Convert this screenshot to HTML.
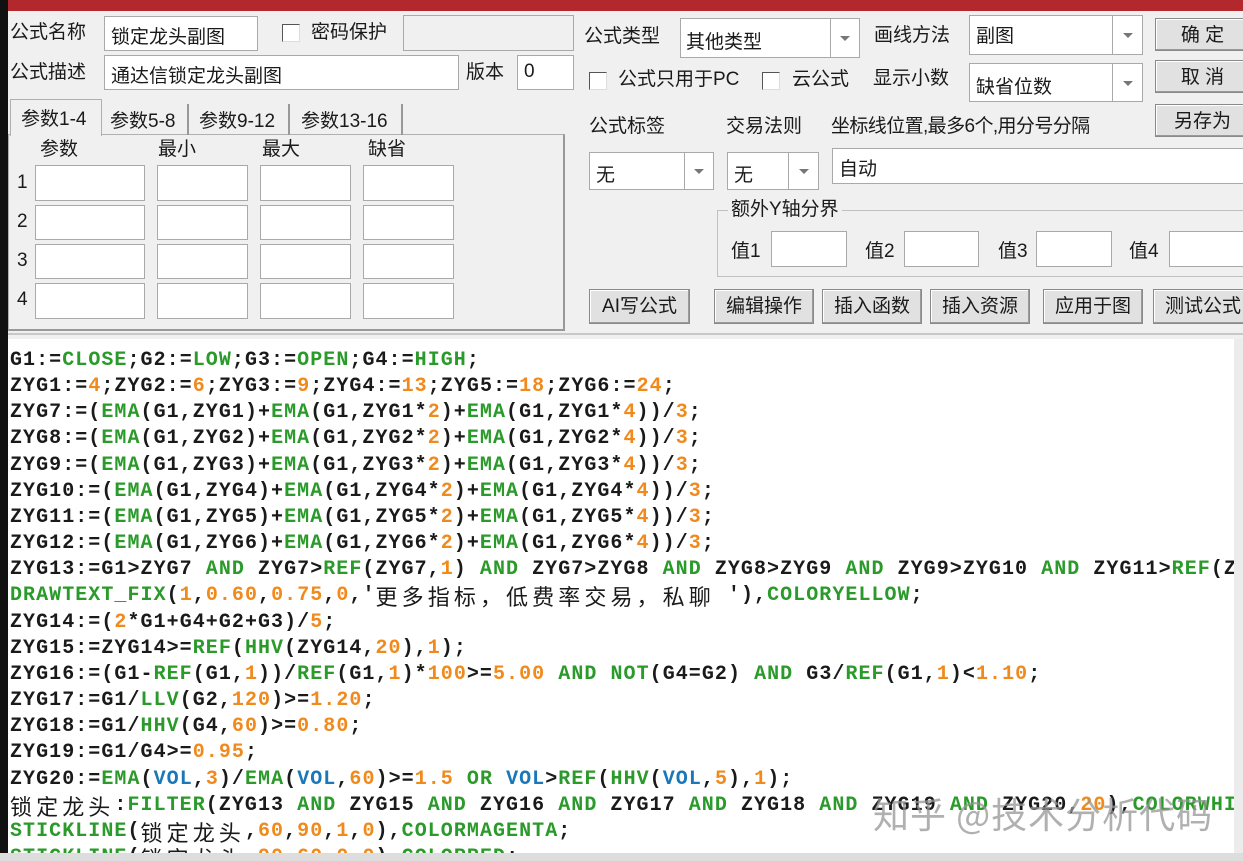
<!DOCTYPE html>
<html><head><meta charset="utf-8"><style>
*{margin:0;padding:0;box-sizing:border-box}
body{width:1243px;height:861px;overflow:hidden;background:#f0f0f0;position:relative;font-family:"Liberation Sans","Noto Sans CJK SC",sans-serif;font-size:19px;color:#1a1a1a}
.a{position:absolute;white-space:nowrap}
.in{position:absolute;background:#fff;border:1px solid #a9a9a9}
.gr{background:#f0f0f0}
.cb{position:absolute;background:#fff;border:1px solid #555;border-right-color:#ddd;border-bottom-color:#ddd;width:18px;height:18px}
.combo{position:absolute;background:#fff;border:1px solid #a9a9a9}
.combo .s{position:absolute;top:0;bottom:0;border-left:1px solid #a9a9a9;right:0}
.combo .s:after{content:"";position:absolute;left:50%;top:50%;margin:-2px 0 0 -5px;border:5px solid transparent;border-top:5px solid #777;border-bottom:0}
.btn{position:absolute;background:#e1e1e1;border:1px solid #8a8a8a;box-shadow:inset -1px -1px 0 #9a9a9a,inset 1px 1px 0 #fff;text-align:center;line-height:33px}
.lb{position:absolute;white-space:nowrap;line-height:22px}
#ed{position:absolute;left:8px;top:339px;width:1226px;height:514px;background:#fff;overflow:hidden}
#code{position:absolute;left:2px;top:9px;font-family:"Liberation Mono","Noto Sans CJK SC",monospace;font-weight:bold;font-size:20px;letter-spacing:1.05px;white-space:pre;color:#1a1a1a}
#code div{height:26.17px;line-height:26.17px;overflow:visible}
.g{color:#2a9a2a}.o{color:#f08a1c}.b{color:#1a78b8}
.c{font-family:"Noto Sans CJK SC",sans-serif;font-weight:normal;font-size:22px;letter-spacing:4.1px;display:inline-block;height:26px;line-height:26px;vertical-align:top}
</style></head><body>
<div class="a" style="left:0;top:0;width:1243px;height:11px;background:#b3282d"></div>
<div class="a" style="left:0;top:0;width:8px;height:861px;background:#111"></div>
<div class="a" style="left:0;top:853px;width:1243px;height:8px;background:#ddd"></div>
<div class="a" style="left:1234px;top:339px;width:9px;height:514px;background:#ececec"></div>

<div class="lb" style="left:10px;top:22px">公式名称</div>
<div class="in" style="left:104px;top:16px;width:154px;height:35px"><span class="a" style="left:6px;top:5px">锁定龙头副图</span></div>
<div class="cb" style="left:282px;top:24px"></div>
<div class="lb" style="left:311px;top:22px">密码保护</div>
<div class="in gr" style="left:403px;top:15px;width:171px;height:36px"></div>
<div class="lb" style="left:10px;top:62px">公式描述</div>
<div class="in" style="left:104px;top:55px;width:355px;height:35px"><span class="a" style="left:6px;top:5px">通达信锁定龙头副图</span></div>
<div class="lb" style="left:466px;top:62px">版本</div>
<div class="in" style="left:517px;top:55px;width:57px;height:35px"><span class="a" style="left:6px;top:5px">0</span></div>

<div class="a" style="left:8px;top:134px;width:557px;height:197px;border:1px solid #b0b0b0;border-right:2px solid #999;border-bottom:2px solid #999"></div>
<div class="a" style="left:10px;top:99px;width:92px;height:37px;border:1px solid #b0b0b0;border-bottom:none;background:#f0f0f0;padding:4px 0 0 10px">参数1-4</div>
<div class="a" style="left:103px;top:104px;width:86px;height:31px;border-right:2px solid #999;padding:2px 0 0 7px">参数5-8</div>
<div class="a" style="left:191px;top:104px;width:99px;height:31px;border-right:2px solid #999;padding:2px 0 0 8px">参数9-12</div>
<div class="a" style="left:292px;top:104px;width:111px;height:31px;border-right:2px solid #999;padding:2px 0 0 9px">参数13-16</div>
<div class="lb" style="left:40px;top:139px">参数</div>
<div class="lb" style="left:158px;top:139px">最小</div>
<div class="lb" style="left:262px;top:139px">最大</div>
<div class="lb" style="left:368px;top:139px">缺省</div>
<div class="lb" style="left:17px;top:172px">1</div><div class="lb" style="left:17px;top:211px">2</div><div class="lb" style="left:17px;top:250px">3</div><div class="lb" style="left:17px;top:289px">4</div>
<div class="in" style="left:35px;top:165px;width:110px;height:36px"></div><div class="in" style="left:157px;top:165px;width:91px;height:36px"></div><div class="in" style="left:260px;top:165px;width:91px;height:36px"></div><div class="in" style="left:363px;top:165px;width:91px;height:36px"></div>
<div class="in" style="left:35px;top:205px;width:110px;height:35px"></div><div class="in" style="left:157px;top:205px;width:91px;height:35px"></div><div class="in" style="left:260px;top:205px;width:91px;height:35px"></div><div class="in" style="left:363px;top:205px;width:91px;height:35px"></div>
<div class="in" style="left:35px;top:244px;width:110px;height:35px"></div><div class="in" style="left:157px;top:244px;width:91px;height:35px"></div><div class="in" style="left:260px;top:244px;width:91px;height:35px"></div><div class="in" style="left:363px;top:244px;width:91px;height:35px"></div>
<div class="in" style="left:35px;top:283px;width:110px;height:36px"></div><div class="in" style="left:157px;top:283px;width:91px;height:36px"></div><div class="in" style="left:260px;top:283px;width:91px;height:36px"></div><div class="in" style="left:363px;top:283px;width:91px;height:36px"></div>

<div class="lb" style="left:584px;top:26px">公式类型</div>
<div class="combo" style="left:680px;top:18px;width:180px;height:40px"><span class="a" style="left:5px;top:8px">其他类型</span><div class="s" style="width:29px"></div></div>
<div class="lb" style="left:874px;top:25px">画线方法</div>
<div class="combo" style="left:969px;top:15px;width:174px;height:40px"><span class="a" style="left:6px;top:5px">副图</span><div class="s" style="width:30px"></div></div>
<div class="btn" style="left:1155px;top:18px;width:95px;height:33px">确 定</div>
<div class="btn" style="left:1155px;top:60px;width:95px;height:33px">取 消</div>
<div class="btn" style="left:1155px;top:104px;width:95px;height:33px">另存为</div>
<div class="cb" style="left:589px;top:72px"></div>
<div class="lb" style="left:618px;top:69px">公式只用于PC</div>
<div class="cb" style="left:762px;top:72px"></div>
<div class="lb" style="left:792px;top:69px">云公式</div>
<div class="lb" style="left:873px;top:68px">显示小数</div>
<div class="combo" style="left:969px;top:63px;width:174px;height:39px"><span class="a" style="left:6px;top:8px">缺省位数</span><div class="s" style="width:30px"></div></div>
<div class="lb" style="left:589px;top:116px">公式标签</div>
<div class="lb" style="left:726px;top:116px">交易法则</div>
<div class="lb" style="left:831px;top:116px;letter-spacing:-0.6px">坐标线位置,最多6个,用分号分隔</div>
<div class="combo" style="left:589px;top:152px;width:125px;height:38px"><span class="a" style="left:6px;top:7px">无</span><div class="s" style="width:29px"></div></div>
<div class="combo" style="left:727px;top:152px;width:92px;height:38px"><span class="a" style="left:6px;top:7px">无</span><div class="s" style="width:30px"></div></div>
<div class="in" style="left:832px;top:148px;width:420px;height:36px"><span class="a" style="left:6px;top:5px">自动</span></div>
<div class="a" style="left:717px;top:210px;width:540px;height:67px;border:1px solid #c0c0c0"></div>
<div class="lb" style="left:728px;top:199px;background:#f0f0f0;padding:0 3px">额外Y轴分界</div>
<div class="lb" style="left:731px;top:241px">值1</div><div class="in" style="left:771px;top:231px;width:76px;height:36px"></div>
<div class="lb" style="left:865px;top:241px">值2</div><div class="in" style="left:904px;top:231px;width:75px;height:36px"></div>
<div class="lb" style="left:998px;top:241px">值3</div><div class="in" style="left:1036px;top:231px;width:76px;height:36px"></div>
<div class="lb" style="left:1129px;top:241px">值4</div><div class="in" style="left:1169px;top:231px;width:80px;height:36px"></div>
<div class="btn" style="left:589px;top:289px;width:101px;height:35px">AI写公式</div>
<div class="btn" style="left:714px;top:289px;width:100px;height:35px">编辑操作</div>
<div class="btn" style="left:822px;top:289px;width:100px;height:35px">插入函数</div>
<div class="btn" style="left:930px;top:289px;width:100px;height:35px">插入资源</div>
<div class="btn" style="left:1043px;top:289px;width:100px;height:35px">应用于图</div>
<div class="btn" style="left:1153px;top:289px;width:100px;height:35px">测试公式</div>
<div class="a" style="left:8px;top:333px;width:1235px;height:2px;background:#c8c8c8"></div>

<div id="ed"><div id="code"><div>G1:=<span class="g">CLOSE</span>;G2:=<span class="g">LOW</span>;G3:=<span class="g">OPEN</span>;G4:=<span class="g">HIGH</span>;</div><div>ZYG1:=<span class="o">4</span>;ZYG2:=<span class="o">6</span>;ZYG3:=<span class="o">9</span>;ZYG4:=<span class="o">13</span>;ZYG5:=<span class="o">18</span>;ZYG6:=<span class="o">24</span>;</div><div>ZYG7:=(<span class="g">EMA</span>(G1,ZYG1)+<span class="g">EMA</span>(G1,ZYG1*<span class="o">2</span>)+<span class="g">EMA</span>(G1,ZYG1*<span class="o">4</span>))/<span class="o">3</span>;</div><div>ZYG8:=(<span class="g">EMA</span>(G1,ZYG2)+<span class="g">EMA</span>(G1,ZYG2*<span class="o">2</span>)+<span class="g">EMA</span>(G1,ZYG2*<span class="o">4</span>))/<span class="o">3</span>;</div><div>ZYG9:=(<span class="g">EMA</span>(G1,ZYG3)+<span class="g">EMA</span>(G1,ZYG3*<span class="o">2</span>)+<span class="g">EMA</span>(G1,ZYG3*<span class="o">4</span>))/<span class="o">3</span>;</div><div>ZYG10:=(<span class="g">EMA</span>(G1,ZYG4)+<span class="g">EMA</span>(G1,ZYG4*<span class="o">2</span>)+<span class="g">EMA</span>(G1,ZYG4*<span class="o">4</span>))/<span class="o">3</span>;</div><div>ZYG11:=(<span class="g">EMA</span>(G1,ZYG5)+<span class="g">EMA</span>(G1,ZYG5*<span class="o">2</span>)+<span class="g">EMA</span>(G1,ZYG5*<span class="o">4</span>))/<span class="o">3</span>;</div><div>ZYG12:=(<span class="g">EMA</span>(G1,ZYG6)+<span class="g">EMA</span>(G1,ZYG6*<span class="o">2</span>)+<span class="g">EMA</span>(G1,ZYG6*<span class="o">4</span>))/<span class="o">3</span>;</div><div>ZYG13:=G1&gt;ZYG7 <span class="g">AND</span> ZYG7&gt;<span class="g">REF</span>(ZYG7,<span class="o">1</span>) <span class="g">AND</span> ZYG7&gt;ZYG8 <span class="g">AND</span> ZYG8&gt;ZYG9 <span class="g">AND</span> ZYG9&gt;ZYG10 <span class="g">AND</span> ZYG11&gt;<span class="g">REF</span>(ZYG11,<span class="o">1</span>);</div><div><span class="g">DRAWTEXT_FIX</span>(<span class="o">1</span>,<span class="o">0.60</span>,<span class="o">0.75</span>,<span class="o">0</span>,'<span class="c">更多指标，低费率交易，私聊</span> '),<span class="g">COLORYELLOW</span>;</div><div>ZYG14:=(<span class="o">2</span>*G1+G4+G2+G3)/<span class="o">5</span>;</div><div>ZYG15:=ZYG14&gt;=<span class="g">REF</span>(<span class="g">HHV</span>(ZYG14,<span class="o">20</span>),<span class="o">1</span>);</div><div>ZYG16:=(G1-<span class="g">REF</span>(G1,<span class="o">1</span>))/<span class="g">REF</span>(G1,<span class="o">1</span>)*<span class="o">100</span>&gt;=<span class="o">5.00</span> <span class="g">AND</span> <span class="g">NOT</span>(G4=G2) <span class="g">AND</span> G3/<span class="g">REF</span>(G1,<span class="o">1</span>)&lt;<span class="o">1.10</span>;</div><div>ZYG17:=G1/<span class="g">LLV</span>(G2,<span class="o">120</span>)&gt;=<span class="o">1.20</span>;</div><div>ZYG18:=G1/<span class="g">HHV</span>(G4,<span class="o">60</span>)&gt;=<span class="o">0.80</span>;</div><div>ZYG19:=G1/G4&gt;=<span class="o">0.95</span>;</div><div>ZYG20:=<span class="g">EMA</span>(<span class="b">VOL</span>,<span class="o">3</span>)/<span class="g">EMA</span>(<span class="b">VOL</span>,<span class="o">60</span>)&gt;=<span class="o">1.5</span> <span class="g">OR</span> <span class="b">VOL</span>&gt;<span class="g">REF</span>(<span class="g">HHV</span>(<span class="b">VOL</span>,<span class="o">5</span>),<span class="o">1</span>);</div><div><span class="c">锁定龙头</span>:<span class="g">FILTER</span>(ZYG13 <span class="g">AND</span> ZYG15 <span class="g">AND</span> ZYG16 <span class="g">AND</span> ZYG17 <span class="g">AND</span> ZYG18 <span class="g">AND</span> ZYG19 <span class="g">AND</span> ZYG20,<span class="o">20</span>),<span class="g">COLORWHITE</span>;</div><div><span class="g">STICKLINE</span>(<span class="c">锁定龙头</span>,<span class="o">60</span>,<span class="o">90</span>,<span class="o">1</span>,<span class="o">0</span>),<span class="g">COLORMAGENTA</span>;</div><div><span class="g">STICKLINE</span>(<span class="c">锁定龙头</span>,<span class="o">90</span>,<span class="o">60</span>,<span class="o">0</span>,<span class="o">0</span>),<span class="g">COLORRED</span>;</div></div>
<div class="a" style="left:865px;top:448px;font-family:'Noto Sans CJK SC',sans-serif;font-size:36px;color:rgba(150,150,150,0.75);letter-spacing:1px">知乎 @技术分析代码</div>
</div>
</body></html>
